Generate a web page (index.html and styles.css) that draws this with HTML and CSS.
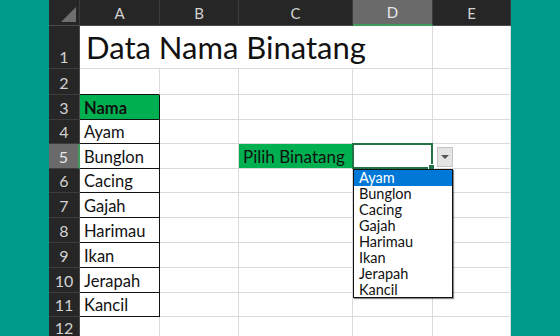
FILE: index.html
```html
<!DOCTYPE html>
<html lang="id">
    <head>
        <meta charset="UTF-8">
        <meta name="viewport" content="width=device-width, initial-scale=1.0">
        <title>Data Nama Binatang</title>
        <link rel="stylesheet" href="styles.css">
    </head>
    <body>
        <div class="sheet">
            <div class="grid">
                <!-- column headers -->
                <div class="hd corner"><span class="tri"></span></div>
                <div class="hd">A</div>
                <div class="hd">B</div>
                <div class="hd">C</div>
                <div class="hd active-col">D</div>
                <div class="hd">E</div>

                <div class="rn">1</div>
                <div class="c title">Data Nama Binatang</div>
                <div class="c"></div>

                <div class="rn">2</div>
                <div class="c top-box"></div>
                <div class="c"></div>
                <div class="c"></div>
                <div class="c"></div>
                <div class="c"></div>

                <div class="rn">3</div>
                <div class="c box head">Nama</div>
                <div class="c"></div>
                <div class="c"></div>
                <div class="c"></div>
                <div class="c"></div>

                <div class="rn">4</div>
                <div class="c box">Ayam</div>
                <div class="c"></div>
                <div class="c"></div>
                <div class="c"></div>
                <div class="c"></div>

                <div class="rn active-row">5</div>
                <div class="c box">Bunglon</div>
                <div class="c"></div>
                <div class="c pick">Pilih Binatang</div>
                <div class="c selected"><span class="handle"></span></div>
                <div class="c"></div>

                <div class="rn">6</div>
                <div class="c box">Cacing</div>
                <div class="c"></div>
                <div class="c"></div>
                <div class="c"></div>
                <div class="c"></div>

                <div class="rn">7</div>
                <div class="c box">Gajah</div>
                <div class="c"></div>
                <div class="c"></div>
                <div class="c"></div>
                <div class="c"></div>

                <div class="rn">8</div>
                <div class="c box">Harimau</div>
                <div class="c"></div>
                <div class="c"></div>
                <div class="c"></div>
                <div class="c"></div>

                <div class="rn">9</div>
                <div class="c box">Ikan</div>
                <div class="c"></div>
                <div class="c"></div>
                <div class="c"></div>
                <div class="c"></div>

                <div class="rn">10</div>
                <div class="c box">Jerapah</div>
                <div class="c"></div>
                <div class="c"></div>
                <div class="c"></div>
                <div class="c"></div>

                <div class="rn">11</div>
                <div class="c box">Kancil</div>
                <div class="c"></div>
                <div class="c"></div>
                <div class="c"></div>
                <div class="c"></div>

                <div class="rn last">12</div>
                <div class="c"></div>
                <div class="c"></div>
                <div class="c"></div>
                <div class="c"></div>
                <div class="c"></div>
            </div>

            <div class="dd-btn"><span class="arrow"></span></div>
            <ul class="dd-list">
                <li class="hl">Ayam</li>
                <li>Bunglon</li>
                <li>Cacing</li>
                <li>Gajah</li>
                <li>Harimau</li>
                <li>Ikan</li>
                <li>Jerapah</li>
                <li>Kancil</li>
            </ul>
        </div>
    </body>
</html>
```

FILE: styles.css
```css
body {
    margin: 0;
    height: 336px;
    overflow: hidden;
    background-color: #009b8b;
    font-family: "Lato", "Liberation Sans", sans-serif;
}
.sheet {
    position: relative;
    width: 462px;
    height: 336px;
    margin-left: 49px;
    overflow: hidden;
    background-color: #fff;
}
.grid {
    display: grid;
    grid-template-columns: 31px 80px 79px 114px 80px 78px;
    grid-template-rows: 26px 43px 26px 25px 24px 25px 24px 25px 25px 25px 25px 24px 24px;
}

/* headers */
.hd {
    box-sizing: border-box;
    display: flex;
    align-items: center;
    justify-content: center;
    background-color: #262626;
    color: #d2d2d2;
    font-size: 15px;
    border-right: 1px solid #3c3c3c;
    border-bottom: 1px solid #4b4b4b;
}
.corner {
    position: relative;
}
.tri {
    position: absolute;
    right: 3px;
    bottom: 3px;
    width: 0;
    height: 0;
    border-left: 15px solid transparent;
    border-bottom: 15px solid #6e6e6e;
}
.active-col {
    background-color: #6a6a6a;
    color: #e8e8e8;
    border-bottom: 2px solid #3f9a5c;
}
.rn {
    box-sizing: border-box;
    display: flex;
    align-items: flex-end;
    justify-content: center;
    padding-bottom: 2px;
    background-color: #262626;
    color: #d2d2d2;
    font-size: 16px;
    border-right: 1px solid #4b4b4b;
    border-bottom: 1px solid #3c3c3c;
}
.rn.last {
    align-items: flex-start;
    padding: 1px 0 0;
}
.active-row {
    background-color: #6a6a6a;
    color: #e8e8e8;
    border-right: 2px solid #3f9a5c;
}

/* cells */
.c {
    box-sizing: border-box;
    display: flex;
    align-items: flex-end;
    padding: 0 0 1px 4px;
    font-size: 16.5px;
    line-height: 20px;
    color: #111;
    border-right: 1px solid #dadada;
    border-bottom: 1px solid #dadada;
    white-space: nowrap;
}
.title {
    grid-column: span 4;
    font-size: 31px;
    line-height: 40px;
    padding-left: 6px;
}
.top-box {
    border-bottom-color: #111;
}
.box {
    border-right-color: #111;
    border-bottom-color: #111;
}
.head {
    background-color: #00b050;
    font-weight: bold;
}
.pick {
    background-color: #00b050;
    border-right-color: #00b050;
    font-size: 17px;
}
.selected {
    position: relative;
    border: 2px solid #217346;
    margin: -1px 0 0 -1px;
}
.handle {
    position: absolute;
    right: -4px;
    bottom: -4px;
    width: 5px;
    height: 5px;
    background-color: #217346;
    border: 1px solid #fff;
}

/* dropdown */
.dd-btn {
    position: absolute;
    left: 388px;
    top: 147px;
    width: 16px;
    height: 20px;
    box-sizing: border-box;
    background-color: #e4e4e4;
    border: 1px solid #c4c4c4;
    display: flex;
    align-items: center;
    justify-content: center;
}
.arrow {
    width: 0;
    height: 0;
    border-left: 4px solid transparent;
    border-right: 4px solid transparent;
    border-top: 4px solid #555;
}
.dd-list {
    position: absolute;
    left: 304px;
    top: 169px;
    width: 100px;
    height: 129px;
    box-sizing: border-box;
    margin: 0;
    padding: 0;
    list-style: none;
    background-color: #fff;
    border: 1px solid #111;
    box-shadow: 1px 1px 1px rgba(0, 0, 0, 0.45);
}
.dd-list li {
    height: 16px;
    line-height: 16px;
    padding-left: 5px;
    font-size: 14.5px;
    color: #111;
}
.dd-list .hl {
    background-color: #0078d7;
    color: #fff;
}
```
